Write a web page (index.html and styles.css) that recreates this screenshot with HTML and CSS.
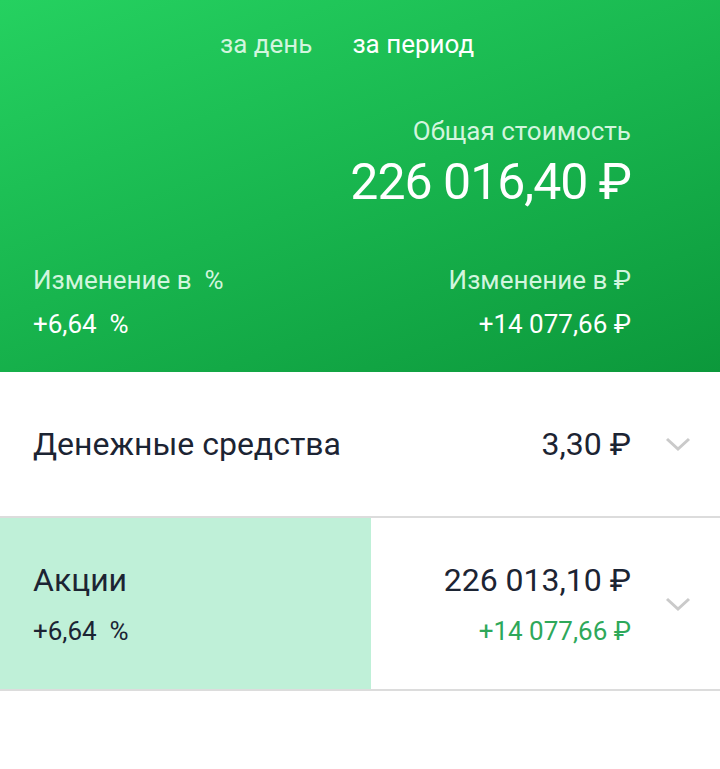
FILE: index.html
```html
<!DOCTYPE html>
<html lang="ru">
<head>
    <meta charset="utf-8">
    <title>Портфель</title>
    <link rel="stylesheet" href="styles.css">
</head>
<body>
    <header class="summary">
        <nav class="summary-tabs">
            <span class="tab">за день</span>
            <span class="tab tab-active">за период</span>
        </nav>
        <div class="summary-total">
            <p class="total-label">Общая стоимость</p>
            <p class="total-value">226 016,40 ₽</p>
        </div>
        <div class="summary-change">
            <div class="change-col">
                <p class="change-label">Изменение в&nbsp; %</p>
                <p class="change-value">+6,64&nbsp; %</p>
            </div>
            <div class="change-col change-right">
                <p class="change-label">Изменение в ₽</p>
                <p class="change-value">+14 077,66 ₽</p>
            </div>
        </div>
    </header>

    <section class="assets">
        <div class="asset-row">
            <div class="asset-name">
                <p class="asset-title">Денежные средства</p>
            </div>
            <div class="asset-sum">
                <p class="asset-amount">3,30 ₽</p>
            </div>
            <svg class="chevron" viewBox="0 0 26 26"><path d="M2 8l11 10 11-10"/></svg>
        </div>
        <div class="asset-row asset-row-tall">
            <div class="asset-name asset-highlight">
                <p class="asset-title">Акции</p>
                <p class="asset-percent">+6,64&nbsp; %</p>
            </div>
            <div class="asset-sum">
                <p class="asset-amount">226 013,10 ₽</p>
                <p class="asset-profit">+14 077,66 ₽</p>
            </div>
            <svg class="chevron" viewBox="0 0 26 26"><path d="M2 8l11 10 11-10"/></svg>
        </div>
    </section>
</body>
</html>
```

FILE: styles.css
```css
:root {
    --text: #1c2433;
    --muted: #d2f5de;
    --divider: #dcdcdc;
    --highlight: #bff0d8;
    --profit: #2ea85a;
}

* {
    margin: 0;
    padding: 0;
    box-sizing: border-box;
}

body {
    font-family: Roboto, "Noto Sans", sans-serif;
    background: #fff;
    color: var(--text);
}

.summary {
    height: 372px;
    padding: 0 89px 0 33px;
    background: linear-gradient(160deg, #25d160 0%, #18b54e 50%, #0c983b 100%);
    color: #fff;
}

.summary-tabs {
    display: flex;
    gap: 40px;
    padding: 28px 0 0 187px;
    font-size: 26px;
    line-height: 32px;
}

.tab {
    color: var(--muted);
}

.tab-active {
    color: #fff;
}

.summary-total {
    text-align: right;
    padding-top: 55px;
}

.total-label {
    font-size: 26px;
    line-height: 32px;
    color: var(--muted);
}

.total-value {
    font-size: 50px;
    line-height: 56px;
    letter-spacing: -1px;
    margin-top: 7px;
}

.summary-change {
    display: flex;
    justify-content: space-between;
    margin-top: 54px;
}

.change-right {
    text-align: right;
}

.change-label {
    font-size: 26px;
    line-height: 32px;
    color: var(--muted);
}

.change-value {
    font-size: 26px;
    line-height: 32px;
    margin-top: 12px;
}

.asset-row {
    display: flex;
    align-items: stretch;
    height: 146px;
    border-bottom: 2px solid var(--divider);
}

.asset-row-tall {
    height: 173px;
}

.asset-name {
    width: 371px;
    padding-left: 33px;
    display: flex;
    flex-direction: column;
    justify-content: center;
}

.asset-highlight {
    background: var(--highlight);
}

.asset-title {
    font-size: 32px;
    line-height: 38px;
}

.asset-percent {
    font-size: 26px;
    line-height: 32px;
    margin-top: 16px;
}

.asset-sum {
    flex: 1;
    display: flex;
    flex-direction: column;
    justify-content: center;
    align-items: flex-end;
}

.asset-amount {
    font-size: 32px;
    line-height: 38px;
}

.asset-profit {
    font-size: 26px;
    line-height: 32px;
    margin-top: 16px;
    color: var(--profit);
}

.chevron {
    align-self: center;
    width: 26px;
    height: 26px;
    margin: 0 29px 0 34px;
    fill: none;
    stroke: #cacaca;
    stroke-width: 3;
}
```
